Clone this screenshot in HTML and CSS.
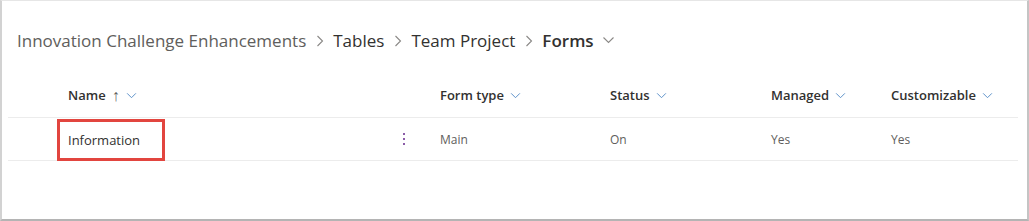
FILE: index.html
```html
<!DOCTYPE html>
<html lang="en">
<head>
    <meta charset="UTF-8">
    <title>Forms</title>
    <link rel="stylesheet" href="styles.css">
</head>
<body>
    <div class="frame">
        <div class="breadcrumb">
            <span class="crumb muted">Innovation Challenge Enhancements</span>
            <svg class="sep" viewBox="0 0 8 12"><path d="M1.5 1 L6.5 6 L1.5 11" /></svg>
            <span class="crumb">Tables</span>
            <svg class="sep" viewBox="0 0 8 12"><path d="M1.5 1 L6.5 6 L1.5 11" /></svg>
            <span class="crumb">Team Project</span>
            <svg class="sep" viewBox="0 0 8 12"><path d="M1.5 1 L6.5 6 L1.5 11" /></svg>
            <span class="crumb current">Forms</span>
            <svg class="caret big" viewBox="0 0 12 8"><path d="M1 1.5 L6 6.5 L11 1.5" /></svg>
        </div>

        <div class="grid head">
            <div></div>
            <div class="col-title">Name <span class="arrow">&#8593;</span>
                <svg class="caret" viewBox="0 0 12 8"><path d="M1 1.5 L6 6.5 L11 1.5" /></svg></div>
            <div></div>
            <div class="col-title">Form type
                <svg class="caret" viewBox="0 0 12 8"><path d="M1 1.5 L6 6.5 L11 1.5" /></svg></div>
            <div class="col-title">Status
                <svg class="caret" viewBox="0 0 12 8"><path d="M1 1.5 L6 6.5 L11 1.5" /></svg></div>
            <div class="col-title">Managed
                <svg class="caret" viewBox="0 0 12 8"><path d="M1 1.5 L6 6.5 L11 1.5" /></svg></div>
            <div class="col-title">Customizable
                <svg class="caret" viewBox="0 0 12 8"><path d="M1 1.5 L6 6.5 L11 1.5" /></svg></div>
        </div>

        <div class="grid row">
            <div></div>
            <div class="name-cell"><span class="highlight">Information</span></div>
            <div class="more"><span></span><span></span><span></span></div>
            <div class="cell">Main</div>
            <div class="cell">On</div>
            <div class="cell">Yes</div>
            <div class="cell">Yes</div>
        </div>
    </div>
</body>
</html>
```

FILE: styles.css
```css
body {
    margin: 0;
    font-family: 'Segoe UI', 'Open Sans', sans-serif;
    background: #fff;
}

.frame {
    box-sizing: border-box;
    width: 1029px;
    height: 221px;
    border-top: 1px solid #e6e6e6;
    border-left: 2px solid #d2d2d2;
    border-right: 2px solid #c4c4c4;
    border-bottom: 2px solid #b4b4b4;
}

.breadcrumb {
    display: flex;
    align-items: center;
    height: 20px;
    margin: 29px 0 0 15px;
    font-size: 17px;
    color: #323130;
}

.breadcrumb .muted {
    color: #605e5c;
}

.breadcrumb .current {
    font-weight: 600;
}

.sep {
    width: 8px;
    height: 12px;
    margin: 2px 9px 0 10px;
    fill: none;
    stroke: #8a8886;
    stroke-width: 1.1;
}

.caret {
    width: 11px;
    height: 7px;
    margin-left: 6px;
    fill: none;
    stroke: #5a8fc8;
    stroke-width: 1.1;
}

.caret.big {
    width: 13px;
    height: 8px;
    margin-left: 8px;
    stroke: #8a8886;
}

.grid {
    display: grid;
    grid-template-columns: 60px 324px 48px 170px 161px 120px 1fr;
    margin: 0 9px 0 6px;
    border-bottom: 1px solid #ececec;
    align-items: center;
}

.head {
    height: 44px;
    margin-top: 23px;
}

.row {
    height: 42px;
}

.col-title {
    font-size: 13px;
    font-weight: 600;
    color: #323130;
    display: flex;
    align-items: center;
}

.arrow {
    margin-left: 6px;
    font-size: 16px;
    font-weight: 400;
    color: #605e5c;
}

.cell {
    font-size: 12px;
    color: #605e5c;
}

.name-cell {
    font-size: 13px;
    color: #323130;
    align-self: stretch;
    display: flex;
    align-items: stretch;
}

.highlight {
    display: flex;
    align-items: center;
    margin: 1px 0 -1px -11px;
    padding: 0 22px 0 8px;
    border: 3px solid #e2453f;
}

.more {
    display: flex;
    flex-direction: column;
    gap: 3px;
    padding-left: 11px;
}

.more span {
    width: 2px;
    height: 2px;
    background: #8b5ca8;
}
```
